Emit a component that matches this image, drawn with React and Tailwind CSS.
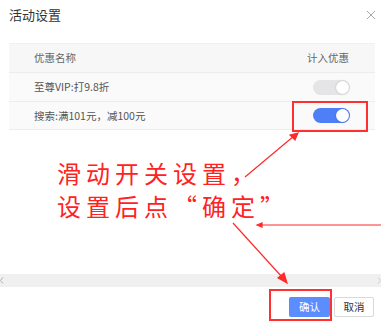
import React from "react";

const rows = [
  { name: "至尊VIP:打9.8折", on: false },
  { name: "搜索:满101元，减100元", on: true },
];

function Toggle({ on }) {
  return (
    <div
      className={`w-[37px] h-[15px] rounded-full flex items-center px-[1px] justify-end ${
        on ? "bg-[#4f7ff7]" : "bg-[#e5e5e8]"
      }`}
    >
      <div className="w-[13px] h-[13px] rounded-full bg-white shadow-[0_0_2px_rgba(0,0,0,0.25)]" />
    </div>
  );
}

export default function App() {
  return (
    <div
      className="relative w-[381px] h-[327px] bg-white overflow-hidden flex flex-col"
      style={{ fontFamily: '"Noto Sans CJK SC", "Noto Sans", sans-serif' }}
    >
      {/* header */}
      <div className="h-[26px] flex items-center justify-between pl-[9px] pr-[5px] pt-[2px]">
        <span className="text-[13px] leading-none text-[#333]">活动设置</span>
        <svg width="10" height="10" viewBox="0 0 10 10" className="mt-[1px]">
          <path d="M1 1 L9 9 M9 1 L1 9" stroke="#a8a8a8" strokeWidth="1" />
        </svg>
      </div>

      {/* table */}
      <div className="mt-[17px] ml-[9px] w-[366px] border-t border-[#f0f0f0] text-[10.5px]">
        <div className="h-[29px] bg-[#f7f7f7] flex items-center justify-between pl-[25px] pr-[26px] text-[#666] border-b border-[#ececec]">
          <span>优惠名称</span>
          <span>计入优惠</span>
        </div>
        {rows.map((r, i) => (
          <div
            key={r.name}
            className={`${i === 0 ? "h-[29px]" : "h-[28px]"} flex items-center justify-between pl-[25px] pr-[25px] text-[#555] bg-[#fafafa] border-b border-[#ececec]`}
          >
            <span>{r.name}</span>
            <Toggle on={r.on} />
          </div>
        ))}
      </div>

      {/* annotation text */}
      <div
        className="mt-[26px] pl-[57px] text-[24px] leading-[33px] tracking-[5px] text-[#ff2222]"
        style={{ fontFamily: '"Noto Sans CJK SC", sans-serif' }}
      >
        <div>滑动开关设置，</div>
        <div>设置后点“确定”</div>
      </div>

      <div className="flex-1" />

      {/* horizontal scrollbar */}
      <div className="h-[13px] bg-[#f0f0f0] flex items-center justify-between">
        <svg width="4" height="7" viewBox="0 0 4 7">
          <path d="M3 0.5 L0.5 3.5 L3 6.5" stroke="#b0b0b0" fill="none" />
        </svg>
        <svg width="4" height="7" viewBox="0 0 4 7">
          <path d="M1 0.5 L3.5 3.5 L1 6.5" stroke="#d0d0d0" fill="none" />
        </svg>
      </div>

      {/* footer */}
      <div className="h-[40px] flex items-start justify-end gap-[4px] pt-[10px] pr-[7px]">
        <button className="w-[41px] h-[20px] rounded-[2px] bg-[#5b8dff] text-white text-[10.5px] leading-none">
          确认
        </button>
        <button className="w-[40px] h-[20px] rounded-[2px] bg-white border border-[#d9d9d9] text-[#333] text-[10.5px] leading-none">
          取消
        </button>
      </div>

      {/* annotation boxes */}
      <div className="absolute left-[292px] top-[101px] w-[76px] h-[31px] border-2 border-[#ff3030]" />
      <div className="absolute left-[269px] top-[289px] w-[63px] h-[32px] border-2 border-[#ff3030]" />

      {/* annotation arrows */}
      <svg className="absolute inset-0 pointer-events-none" width="381" height="327" viewBox="0 0 381 327">
        <g stroke="#ff2a2a" strokeWidth="1.2" fill="#ff2a2a">
          <line x1="245" y1="177" x2="294" y2="136" />
          <path d="M298 133 L290 135 L295 140 Z" />
          <line x1="381" y1="225" x2="261" y2="225" />
          <path d="M257 225 L262 223 L262 227 Z" />
          <line x1="233" y1="223" x2="282" y2="277" />
          <path d="M287 283 L278 278 L284 273 Z" />
        </g>
      </svg>
    </div>
  );
}
